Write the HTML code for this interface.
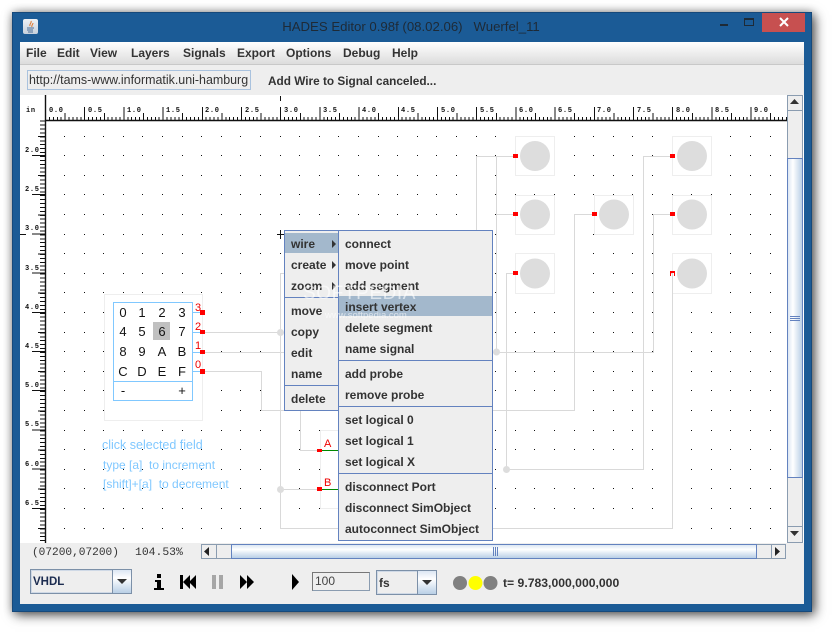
<!DOCTYPE html>
<html>
<head>
<meta charset="utf-8">
<style>
html,body{margin:0;padding:0;width:832px;height:632px;background:#fff;overflow:hidden;font-family:"Liberation Sans",sans-serif}
.a{position:absolute}
.t{position:absolute;white-space:pre;line-height:14px;height:14px}
.b{font-weight:bold;font-size:12px;color:#333}
.k{font-size:13px;color:#111;width:20px;text-align:center;line-height:14px;height:14px;position:absolute}
.r{font-size:11px;color:#e00;position:absolute;line-height:12px;height:12px}
.h{font-size:12px;color:#80c8ff;position:absolute;white-space:pre;line-height:14px}
.g{background:linear-gradient(#dce7f3,#fff 35%,#b9cfe6)}
.m{position:absolute;background:#eee;border:1px solid #6382bf;box-sizing:border-box}
.sep{position:absolute;height:1px;background:#6382bf;left:0;right:0}
svg text{font-family:"Liberation Mono",monospace;font-size:7px;font-weight:bold;fill:#111;letter-spacing:.7px}
</style>
</head>
<body>
<div class="a" style="left:12px;top:12px;width:800px;height:600px;background:#1b5b96;box-shadow:3px 3px 11px rgba(0,0,0,.65),0 0 8px rgba(0,0,0,.25);box-sizing:border-box;border:1px solid #16497b"></div>

<!-- title bar -->
<div class="a" style="left:23px;top:19px;width:15px;height:15px;background:linear-gradient(#eef1f5,#c6d0dc);border-radius:2px"></div>
<svg class="a" style="left:23px;top:19px" width="15" height="15"><path d="M8 2c1 2-2 3-1 5M10 4c0 2-2 2-1 4" stroke="#e0762a" fill="none"/><path d="M4 9h7M4 11h6M5 13h5" stroke="#4c6f98"/></svg>
<div class="t" style="left:0;width:822px;top:19px;height:16px;line-height:16px;text-align:center;font-size:13.2px;color:#1e2a36">HADES Editor 0.98f (08.02.06)   Wuerfel_11</div>
<div class="a" style="left:720px;top:24px;width:8px;height:2px;background:#1e2a36"></div>
<div class="a" style="left:744px;top:18px;width:10px;height:8px;box-sizing:border-box;border:1px solid #1e2a36;border-top-width:2px"></div>
<div class="a" style="left:762px;top:13px;width:43px;height:19px;background:#c75050"></div>
<svg class="a" style="left:762px;top:13px" width="43" height="19"><path d="M18 5l8 8M26 5l-8 8" stroke="#fff" stroke-width="2"/></svg>

<!-- menu bar -->
<div class="a" style="left:20px;top:42px;width:784px;height:22px;background:linear-gradient(#fff,#dcdcdc)"></div>
<div class="a" style="left:20px;top:64px;width:784px;height:1px;background:#c8c8c8"></div>
<div class="t b" style="left:26px;top:46px">File</div>
<div class="t b" style="left:57px;top:46px">Edit</div>
<div class="t b" style="left:90px;top:46px">View</div>
<div class="t b" style="left:131px;top:46px">Layers</div>
<div class="t b" style="left:183px;top:46px">Signals</div>
<div class="t b" style="left:237px;top:46px">Export</div>
<div class="t b" style="left:286px;top:46px">Options</div>
<div class="t b" style="left:343px;top:46px">Debug</div>
<div class="t b" style="left:392px;top:46px">Help</div>

<!-- toolbar -->
<div class="a" style="left:20px;top:65px;width:784px;height:30px;background:#eee"></div>
<div class="a" style="left:27px;top:70px;width:224px;height:20px;box-sizing:border-box;border:1px solid #a9c2de;background:#eee;overflow:hidden;font-size:12.45px;line-height:18px;color:#333;padding-left:1px;white-space:nowrap">http://tams-www.informatik.uni-hamburg</div>
<div class="t b" style="left:268px;top:74px;font-size:11.8px">Add Wire to Signal canceled...</div>

<!-- lower panel -->
<div class="a" style="left:20px;top:543px;width:784px;height:61px;background:#eee"></div>
<div class="a" style="left:20px;top:95px;width:784px;height:448px;background:#fff"></div>

<!-- canvas -->
<svg class="a" style="left:0;top:0" width="832" height="632" shape-rendering="crispEdges">
<defs>
<path id="row" d="M64 0h1v1h-1zM84 0h1v1h-1zM103 0h1v1h-1zM123 0h1v1h-1zM142 0h1v1h-1zM162 0h1v1h-1zM182 0h1v1h-1zM201 0h1v1h-1zM221 0h1v1h-1zM240 0h1v1h-1zM260 0h1v1h-1zM280 0h1v1h-1zM299 0h1v1h-1zM319 0h1v1h-1zM338 0h1v1h-1zM358 0h1v1h-1zM378 0h1v1h-1zM397 0h1v1h-1zM417 0h1v1h-1zM436 0h1v1h-1zM456 0h1v1h-1zM476 0h1v1h-1zM495 0h1v1h-1zM515 0h1v1h-1zM534 0h1v1h-1zM554 0h1v1h-1zM574 0h1v1h-1zM593 0h1v1h-1zM613 0h1v1h-1zM632 0h1v1h-1zM652 0h1v1h-1zM672 0h1v1h-1zM691 0h1v1h-1zM711 0h1v1h-1zM730 0h1v1h-1zM750 0h1v1h-1zM770 0h1v1h-1z" fill="#111"/>
</defs>
<use href="#row" y="136"/><use href="#row" y="155"/><use href="#row" y="175"/><use href="#row" y="194"/><use href="#row" y="214"/><use href="#row" y="234"/><use href="#row" y="253"/><use href="#row" y="273"/><use href="#row" y="292"/><use href="#row" y="312"/><use href="#row" y="332"/><use href="#row" y="351"/><use href="#row" y="371"/><use href="#row" y="390"/><use href="#row" y="410"/><use href="#row" y="430"/><use href="#row" y="449"/><use href="#row" y="469"/><use href="#row" y="488"/><use href="#row" y="508"/><use href="#row" y="528"/>

<!-- rulers -->
<rect x="20" y="95" width="767" height="25" fill="#fff"/>
<rect x="20" y="120" width="25" height="423" fill="#fff"/>
<g stroke="#111" fill="none">
<path d="M45 120.5H787" stroke-width="1.4" shape-rendering="auto"/>
<path d="M45.5 95V543" stroke-width="1.4" shape-rendering="auto"/>
<path d="M45 118.5H787" stroke-width="3" stroke-dasharray="1 2.92"/>
<path d="M64.6 116.5H787" stroke-width="7" stroke-dasharray="1 38.2"/>
<path d="M45 113.5H787" stroke-width="13" stroke-dasharray="1 38.2"/>
<path d="M42.5 120V543" stroke-width="5" stroke-dasharray="1 2.92" stroke-dashoffset="-0.7"/>
<path d="M41.5 135.9V543" stroke-width="7" stroke-dasharray="1 38.2"/>
<path d="M38.5 155V543" stroke-width="13" stroke-dasharray="1 38.2"/>
<path d="M280.5 96V101"/>
<path d="M20 234.5H26"/>
<path d="M277 234.5H286M280.5 230V239"/>
</g>
<g shape-rendering="auto">
<text x="26" y="112">in</text>
<text x="49" y="112">0.0</text><text x="88" y="112">0.5</text><text x="127" y="112">1.0</text><text x="166" y="112">1.5</text><text x="205" y="112">2.0</text><text x="245" y="112">2.5</text><text x="284" y="112">3.0</text><text x="323" y="112">3.5</text><text x="362" y="112">4.0</text><text x="401" y="112">4.5</text><text x="441" y="112">5.0</text><text x="480" y="112">5.5</text><text x="519" y="112">6.0</text><text x="558" y="112">6.5</text><text x="597" y="112">7.0</text><text x="637" y="112">7.5</text><text x="676" y="112">8.0</text><text x="715" y="112">8.5</text><text x="754" y="112">9.0</text>
<text x="25" y="152">2.0</text><text x="25" y="191">2.5</text><text x="25" y="230">3.0</text><text x="25" y="270">3.5</text><text x="25" y="309">4.0</text><text x="25" y="348">4.5</text><text x="25" y="387">5.0</text><text x="25" y="426">5.5</text><text x="25" y="466">6.0</text><text x="25" y="505">6.5</text>
</g>

<!-- component boxes -->
<g fill="#fff" stroke="#eee">
<rect x="515.5" y="136.5" width="39" height="39"/>
<rect x="515.5" y="195.5" width="39" height="39"/>
<rect x="515.5" y="253.5" width="39" height="40"/>
<rect x="594.5" y="195.5" width="39" height="39"/>
<rect x="672.5" y="136.5" width="39" height="39"/>
<rect x="672.5" y="195.5" width="39" height="39"/>
<rect x="672.5" y="253.5" width="39" height="40"/>
<rect x="104.5" y="294.5" width="98" height="126"/>
<rect x="320.5" y="430.5" width="39" height="78"/>
</g>

<!-- wires -->
<g stroke="#d9d9d9" fill="none">
<path d="M476.5 231V156.5H514M496.5 156V352M496 214.5H514"/>
<path d="M514 273.5H506.5V469.5H643.5V156.5H670"/>
<path d="M592 214.5H574.5V410.5H261.5V371.5H205"/>
<path d="M670 214.5H653.5V352.5H205"/>
<path d="M670 273.5H672.5V528.5H280.5V273.5H286"/>
<path d="M205 332.5H286"/>
<path d="M300.5 410V450.5H317"/>
<path d="M280 489.5H317"/>
</g>
<g fill="#ddd" shape-rendering="auto">
<circle cx="535" cy="156" r="15"/><circle cx="535" cy="214.5" r="15"/><circle cx="535" cy="273.5" r="15"/>
<circle cx="614" cy="214.5" r="15"/>
<circle cx="692" cy="156" r="15"/><circle cx="692" cy="214.5" r="15"/><circle cx="692" cy="273.5" r="15"/>
<circle cx="280.5" cy="332.5" r="3.5"/><circle cx="496.5" cy="352" r="3.5"/><circle cx="506.5" cy="469.5" r="3.5"/><circle cx="280.5" cy="489.5" r="3.5"/>
</g>

<!-- green lines and blue stubs -->
<path d="M322 450.5H340M322 489.5H340" stroke="#080"/>
<path d="M192 312.5H201M192 332.5H201M192 352.5H201M192 371.5H201" stroke="#80c8ff"/>

<!-- pins -->
<g fill="#f00">
<path d="M513 154h5v4h-5zM513 212h5v4h-5zM513 271h5v4h-5zM592 212h5v4h-5zM670 154h5v4h-5zM670 212h5v4h-5z"/>
<path d="M670 271h5v5h-1v-3h-3v3h-1z"/>
<path d="M200 310h5v5h-5zM200 330h5v4h-5zM200 350h5v4h-5zM200 369h5v5h-5z"/>
<path d="M317 449h5v3h-5zM317 487h5v4h-5z"/>
</g>

<!-- keypad -->
</svg>
<div class="a" style="left:113px;top:302px;width:80px;height:99px;box-sizing:border-box;border:1px solid #80c8ff"></div>
<div class="a" style="left:113px;top:381px;width:80px;height:1px;background:#80c8ff"></div>
<div class="a" style="left:153px;top:322px;width:17px;height:18px;background:#c0c0c0"></div>
<div class="k" style="left:113px;top:306px">0</div><div class="k" style="left:132px;top:306px">1</div><div class="k" style="left:152px;top:306px">2</div><div class="k" style="left:172px;top:306px">3</div>
<div class="k" style="left:113px;top:325px">4</div><div class="k" style="left:132px;top:325px">5</div><div class="k" style="left:152px;top:325px">6</div><div class="k" style="left:172px;top:325px">7</div>
<div class="k" style="left:113px;top:345px">8</div><div class="k" style="left:132px;top:345px">9</div><div class="k" style="left:152px;top:345px">A</div><div class="k" style="left:172px;top:345px">B</div>
<div class="k" style="left:113px;top:365px">C</div><div class="k" style="left:132px;top:365px">D</div><div class="k" style="left:152px;top:365px">E</div><div class="k" style="left:172px;top:365px">F</div>
<div class="k" style="left:113px;top:384px">-</div><div class="k" style="left:172px;top:384px">+</div>
<div class="r" style="left:195px;top:302px">3</div><div class="r" style="left:195px;top:321px">2</div><div class="r" style="left:195px;top:340px">1</div><div class="r" style="left:195px;top:359px">0</div>
<div class="r" style="left:324px;top:438px">A</div><div class="r" style="left:324px;top:477px">B</div>
<div class="h" style="left:102px;top:438px;font-size:12.5px">click selected field</div>
<div class="h" style="left:103px;top:458px">type [a]  to increment</div>
<div class="h" style="left:103px;top:477px">[shift]+[a]  to decrement</div>

<!-- popup menus -->
<div class="m" style="left:284px;top:230px;width:55px;height:181px">
<div class="a" style="left:0;right:0;top:2px;height:20px;background:#a3b8cc"></div>
<div class="sep" style="top:66px"></div>
<div class="sep" style="top:154px"></div>
</div>
<div class="m" style="left:338px;top:230px;width:155px;height:311px">
<div class="a" style="left:0;right:0;top:65px;height:20px;background:#a3b8cc"></div>
<div class="sep" style="top:129px"></div>
<div class="sep" style="top:175px"></div>
<div class="sep" style="top:242px"></div>
</div>
<div class="t b" style="left:291px;top:237px">wire</div>
<div class="t b" style="left:291px;top:258px">create</div>
<div class="t b" style="left:291px;top:279px">zoom</div>
<div class="t b" style="left:291px;top:304px">move</div>
<div class="t b" style="left:291px;top:325px">copy</div>
<div class="t b" style="left:291px;top:346px">edit</div>
<div class="t b" style="left:291px;top:367px">name</div>
<div class="t b" style="left:291px;top:392px">delete</div>
<svg class="a" style="left:330px;top:238px" width="8" height="56"><path d="M2 2l4 4l-4 4zM2 23l4 4l-4 4zM2 44l4 4l-4 4z" fill="#333"/></svg>
<div class="t b" style="left:345px;top:237px">connect</div>
<div class="t b" style="left:345px;top:258px">move point</div>
<div class="t b" style="left:345px;top:279px">add segment</div>
<div class="t b" style="left:345px;top:300px">insert vertex</div>
<div class="t b" style="left:345px;top:321px">delete segment</div>
<div class="t b" style="left:345px;top:342px">name signal</div>
<div class="t b" style="left:345px;top:367px">add probe</div>
<div class="t b" style="left:345px;top:388px">remove probe</div>
<div class="t b" style="left:345px;top:413px">set logical 0</div>
<div class="t b" style="left:345px;top:434px">set logical 1</div>
<div class="t b" style="left:345px;top:455px">set logical X</div>
<div class="t b" style="left:345px;top:480px">disconnect Port</div>
<div class="t b" style="left:345px;top:501px">disconnect SimObject</div>
<div class="t b" style="left:345px;top:522px">autoconnect SimObject</div>

<!-- watermark -->
<div class="t" style="left:303px;top:285px;font-size:19px;height:18px;line-height:18px;color:rgba(255,255,255,.6);letter-spacing:.6px">SOFTPEDIA</div>
<div class="t" style="left:325px;top:309px;font-size:9.5px;color:rgba(255,255,255,.6)">www.softpedia.com</div>

<!-- vertical scrollbar -->
<div class="a" style="left:787px;top:95px;width:16px;height:448px;background:#eee;box-sizing:border-box;border:1px solid #8a9cb0"></div>
<div class="a" style="left:787px;top:95px;width:16px;height:16px;background:#eee;box-sizing:border-box;border:1px solid #8a9cb0"></div>
<div class="a" style="left:787px;top:526px;width:16px;height:17px;background:#eee;box-sizing:border-box;border:1px solid #8a9cb0"></div>
<div class="a" style="left:787px;top:158px;width:16px;height:320px;box-sizing:border-box;border:1px solid #6382bf;background:linear-gradient(90deg,#dce7f3,#fff 35%,#b9cfe6)"></div>
<svg class="a" style="left:787px;top:95px" width="16" height="448"><path d="M3 9h9l-4.500-5zM3 436h9l-4.500 5z" fill="#333"/><path d="M3 221.500h10M3 223.500h10M3 225.500h10" stroke="#6382bf"/></svg>

<!-- horizontal scrollbar -->
<div class="a" style="left:201px;top:544px;width:585px;height:15px;background:#eee;box-sizing:border-box;border:1px solid #8a9cb0"></div>
<div class="a" style="left:201px;top:544px;width:16px;height:15px;background:#eee;box-sizing:border-box;border:1px solid #8a9cb0"></div>
<div class="a" style="left:771px;top:544px;width:15px;height:15px;background:#eee;box-sizing:border-box;border:1px solid #8a9cb0"></div>
<div class="a g" style="left:231px;top:544px;width:526px;height:15px;box-sizing:border-box;border:1px solid #6382bf"></div>
<svg class="a" style="left:201px;top:544px" width="585" height="15"><path d="M8 3v9l-5-4.500zM574 3v9l5-4.500z" fill="#222"/><path d="M292.500 3v9M294.500 3v9M296.500 3v9" stroke="#6382bf"/></svg>

<!-- status -->
<div class="t" style="left:32px;top:546px;font:11.15px/14px 'Liberation Mono',monospace;color:#333">(07200,07200)</div>
<div class="t" style="left:135px;top:546px;font:11.4px/14px 'Liberation Mono',monospace;color:#333">104.53%</div>

<!-- VHDL combo -->
<div class="a" style="left:30px;top:569px;width:102px;height:25px;box-sizing:border-box;border:1px solid #7c90a8;background:#eee;box-shadow:inset 0 0 0 1px #cfd9e6"></div>
<div class="a g" style="left:112px;top:569px;width:20px;height:25px;box-sizing:border-box;border:1px solid #7c90a8"></div>
<div class="t b" style="left:33px;top:575px;color:#1c2c50;font-size:11.5px">VHDL</div>
<svg class="a" style="left:112px;top:569px" width="20" height="25"><path d="M5 10h10l-5 5z" fill="#333"/></svg>

<!-- transport icons -->
<svg class="a" style="left:140px;top:560px" width="170" height="40" shape-rendering="crispEdges">
<path d="M17 14h4v4h-4zM15 20h6v8h3v2H14v-2h3v-6h-2z" fill="#000"/>
<path d="M40 15h3v14h-3zM43 22l7-7v14zM49 22l7-7v14z" fill="#000" shape-rendering="auto"/>
<path d="M72 15h4v14h-4zM79 15h4v14h-4z" fill="#a6a6a6"/>
<path d="M100 15l7 7l-7 7zM107 15l7 7l-7 7z" fill="#000" shape-rendering="auto"/>
<path d="M152 14l7 8l-7 8z" fill="#000" shape-rendering="auto"/>
</svg>

<!-- 100 field -->
<div class="a" style="left:312px;top:572px;width:58px;height:19px;box-sizing:border-box;border:1px solid #8a9cb0;border-top-color:#777;border-left-color:#777;background:#eee;font-size:12px;line-height:17px;color:#444;padding-left:2px">100</div>

<!-- fs combo -->
<div class="a" style="left:376px;top:570px;width:61px;height:25px;box-sizing:border-box;border:1px solid #7c90a8;background:#eee;box-shadow:inset 0 0 0 1px #cfd9e6"></div>
<div class="a g" style="left:417px;top:570px;width:20px;height:25px;box-sizing:border-box;border:1px solid #7c90a8"></div>
<div class="t b" style="left:379px;top:576px">fs</div>
<svg class="a" style="left:417px;top:570px" width="20" height="25"><path d="M5 10h10l-5 5z" fill="#333"/></svg>

<!-- LEDs -->
<svg class="a" style="left:450px;top:573px" width="50" height="20"><circle cx="10" cy="10" r="7" fill="#808080"/><circle cx="25.500" cy="10" r="7" fill="#ff0"/><circle cx="40.500" cy="10" r="7" fill="#808080"/></svg>
<div class="t b" style="left:503px;top:576px;font-size:12.2px">t= 9.783,000,000,000</div>
</body>
</html>
